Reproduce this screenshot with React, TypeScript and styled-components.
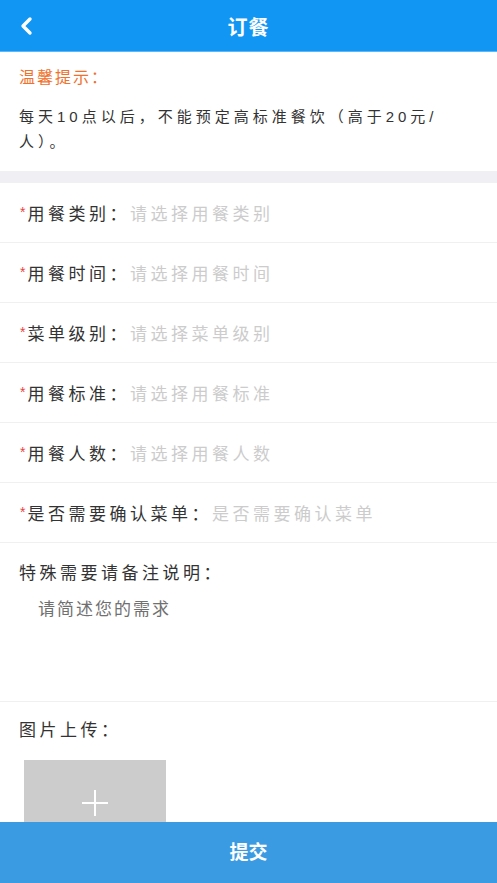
import React from "react";
import styled, { createGlobalStyle } from "styled-components";

const GlobalStyle = createGlobalStyle`
  body {
    margin: 0;
    background: #ffffff;
    font-family: "Liberation Sans", "Noto Sans CJK SC", sans-serif;
    color: #333333;
  }
  * { box-sizing: border-box; }
`;

const Page = styled.div`
  display: flex;
  flex-direction: column;
  padding-bottom: 80px;
`;

const Header = styled.header`
  height: 52px;
  background-color: #1296f3;
  border-bottom: 1px solid #5fb6f6;
  display: grid;
  grid-template-columns: 52px 1fr 52px;
  align-items: center;
`;

const BackButton = styled.button`
  background: none;
  border: none;
  padding: 0 0 0 20px;
  height: 52px;
  display: flex;
  align-items: center;
  cursor: pointer;
`;

const Title = styled.h1`
  margin: 0;
  text-align: center;
  color: #ffffff;
  font-size: 20px;
  font-weight: bold;
  letter-spacing: 1px;
`;

const Notice = styled.section`
  padding: 15px 19px 17px 19px;
  border-bottom: 12px solid #efeff4;
`;

const NoticeTitle = styled.p`
  margin: 0 0 15px 0;
  color: #f0712c;
  font-size: 16px;
  line-height: 22px;
  letter-spacing: 2px;
`;

const NoticeText = styled.p`
  margin: 0;
  color: #333333;
  font-size: 15px;
  line-height: 25px;
  letter-spacing: 4px;
`;

const Row = styled.div`
  height: 60px;
  padding: 0 19px;
  display: flex;
  align-items: center;
  border-bottom: 1px solid #f0f0f0;
  font-size: 17px;
  letter-spacing: 3.5px;
`;

const Star = styled.span`
  color: #e64340;
  font-size: 14px;
  letter-spacing: 0;
  margin: 0 2px 0 1px;
  position: relative;
  top: -1px;
`;

const Label = styled.span`
  color: #333333;
  white-space: nowrap;
`;

const Placeholder = styled.span`
  color: #cccccc;
  white-space: nowrap;
`;

const RemarkBlock = styled.div`
  height: 159px;
  padding: 19px 19px 0 19px;
  border-bottom: 1px solid #f0f0f0;
  display: flex;
  flex-direction: column;
  gap: 12px;
`;

const BlockLabel = styled.div`
  font-size: 17px;
  line-height: 24px;
  letter-spacing: 3.5px;
  color: #333333;
`;

const RemarkInput = styled.div`
  padding-left: 19px;
  font-size: 17px;
  line-height: 24px;
  letter-spacing: 2px;
  color: #707070;
`;

const UploadBlock = styled.div`
  padding: 17px 19px 0 19px;
  display: flex;
  flex-direction: column;
  gap: 17px;
`;

const UploadBox = styled.div`
  margin-left: 5px;
  width: 142px;
  height: 86px;
  background-color: #cccccc;
  display: flex;
  align-items: center;
  justify-content: center;
`;

const SubmitBar = styled.button`
  position: fixed;
  left: 0;
  right: 0;
  bottom: 0;
  height: 61px;
  padding: 0 0 4px 0;
  border: none;
  background-color: #3a9be2;
  color: #ffffff;
  font-family: "Liberation Sans", "Noto Sans CJK SC", sans-serif;
  font-size: 19px;
  font-weight: bold;
  cursor: pointer;
`;

const fields = [
  { label: "用餐类别", hint: "请选择用餐类别" },
  { label: "用餐时间", hint: "请选择用餐时间" },
  { label: "菜单级别", hint: "请选择菜单级别" },
  { label: "用餐标准", hint: "请选择用餐标准" },
  { label: "用餐人数", hint: "请选择用餐人数" },
  { label: "是否需要确认菜单", hint: "是否需要确认菜单" },
];

export default function App() {
  return (
    <>
      <GlobalStyle />
      <Page>
        <Header>
          <BackButton aria-label="返回">
            <svg width="14" height="20" viewBox="0 0 14 20">
              <polyline
                points="10,3 3,10 10,17"
                fill="none"
                stroke="#ffffff"
                strokeWidth="3.4"
                strokeLinecap="round"
                strokeLinejoin="round"
              />
            </svg>
          </BackButton>
          <Title>订餐</Title>
          <span />
        </Header>

        {/* 温馨提示 */}
        <Notice>
          <NoticeTitle>温馨提示：</NoticeTitle>
          <NoticeText>每天10点以后，不能预定高标准餐饮（高于20元/人）。</NoticeText>
        </Notice>

        {fields.map((f) => (
          <Row key={f.label}>
            <Star>*</Star>
            <Label>{f.label}：</Label>
            <Placeholder>{f.hint}</Placeholder>
          </Row>
        ))}

        <RemarkBlock>
          <BlockLabel>特殊需要请备注说明：</BlockLabel>
          <RemarkInput>请简述您的需求</RemarkInput>
        </RemarkBlock>

        <UploadBlock>
          <BlockLabel>图片上传：</BlockLabel>
          <UploadBox>
            <svg width="28" height="28" viewBox="0 0 28 28">
              <path d="M14 1 V27 M1 14 H27" stroke="#ffffff" strokeWidth="2" />
            </svg>
          </UploadBox>
        </UploadBlock>
      </Page>
      <SubmitBar>提交</SubmitBar>
    </>
  );
}
